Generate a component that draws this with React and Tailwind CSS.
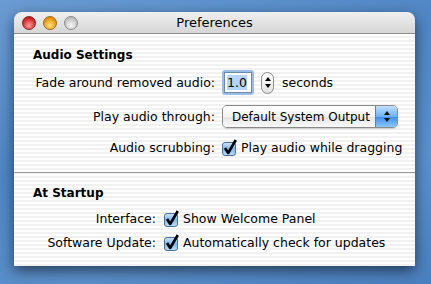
const Checkbox = () => (
  <svg width="17" height="18" viewBox="0 0 17 18" className="shrink-0">
    <defs>
      <linearGradient id="cbg" x1="0" y1="0" x2="0" y2="1">
        <stop offset="0" stopColor="#cfe6fb" />
        <stop offset="0.5" stopColor="#7db6ef" />
        <stop offset="1" stopColor="#b9e0ff" />
      </linearGradient>
    </defs>
    <rect x="1.5" y="3.5" width="13" height="13" rx="2.5" fill="url(#cbg)" stroke="#4f6f98" />
    <path d="M4 9 L7.2 14 L14.8 1" fill="none" stroke="#000" strokeWidth="2.6" strokeLinejoin="round" />
  </svg>
);

const Light = ({ from, to, border }) => (
  <div
    className="w-[14px] h-[14px] rounded-full border"
    style={{ background: `radial-gradient(circle at 50% 70%, ${from} 0%, ${to} 75%)`, borderColor: border }}
  />
);

const Row = ({ label, width, children, className = "" }) => (
  <div className={`flex items-center ${className}`}>
    <div className="text-right pr-[7px] shrink-0 whitespace-nowrap" style={{ width }}>{label}</div>
    <div className="flex items-center gap-[6px] whitespace-nowrap">{children}</div>
  </div>
);

export default function App() {
  return (
    <div className="w-[431px] h-[284px] overflow-hidden bg-[linear-gradient(160deg,#6a9bd2_0%,#4f86c4_40%,#5b90cb_70%,#4a80bf_100%)] pt-[12px] pl-[14px] font-['DejaVu_Sans',sans-serif] text-[12.5px] leading-[16px] text-black">
      <div className="w-[401px] h-[254px] flex flex-col rounded-t-[8px] shadow-[0_5px_14px_rgba(0,0,0,0.55)]">
        {/* title bar */}
        <div className="h-[22px] relative flex items-center justify-center rounded-t-[8px] bg-[linear-gradient(#f0f0f0,#d6d6d6)] border-b border-[#8c8c8c]">
          <div className="absolute left-[8px] top-[4px] flex gap-[7px]">
            <Light from="#ff9a9a" to="#c81818" border="#8a2020" />
            <Light from="#ffe27a" to="#e08a00" border="#9a6a10" />
            <Light from="#f8f8f8" to="#bdbdbd" border="#8a8a8a" />
          </div>
          <span className="text-[13px]">Preferences</span>
        </div>

        {/* body */}
        <div className="flex-1 bg-[image:repeating-linear-gradient(180deg,#ffffff_0px,#ffffff_2px,#f1f1f1_2px,#f1f1f1_4px)]">
          <div className="pt-[13px] pl-[19px] font-bold text-[12px]">Audio Settings</div>

          <Row label="Fade around removed audio:" width={208} className="mt-[7px]">
            <div className="p-[2px] rounded-[3px] bg-[#9dbde9]">
              <div className="w-[28px] h-[21px] bg-white border border-[#6d88ad] flex items-center pl-[2px]">
                <span className="bg-[#b5d5ff] leading-[15px]">1.0</span>
              </div>
            </div>
            <div className="w-[13px] h-[22px] rounded-full border border-[#8c8c8c] bg-[linear-gradient(#ffffff,#e2e2e2)] flex flex-col items-center justify-center gap-[3px] ml-[1px]">
              <div className="w-0 h-0 border-l-[3px] border-r-[3px] border-b-[4px] border-l-transparent border-r-transparent border-b-black" />
              <div className="w-0 h-0 border-l-[3px] border-r-[3px] border-t-[4px] border-l-transparent border-r-transparent border-t-black" />
            </div>
            <span className="ml-[2px]">seconds</span>
          </Row>

          <Row label="Play audio through:" width={208} className="mt-[10px]">
            <div className="w-[176px] h-[23px] flex rounded-[5px] border border-[#8a8a8a] overflow-hidden shadow-[0_1px_1px_rgba(0,0,0,0.15)]">
              <div className="flex-1 flex items-center pl-[9px] text-[12px] bg-[linear-gradient(#ffffff,#f3f3f3_50%,#e4e4e4_51%,#fafafa)]">
                Default System Output
              </div>
              <div className="w-[22px] flex flex-col items-center justify-center gap-[3px] bg-[linear-gradient(#c4e0ff,#6fb0f5_50%,#3d8be8_51%,#8cc8ff)] border-l border-[#5a7fb8]">
                <div className="w-0 h-0 border-l-[3px] border-r-[3px] border-b-[4px] border-l-transparent border-r-transparent border-b-[#111]" />
                <div className="w-0 h-0 border-l-[3px] border-r-[3px] border-t-[4px] border-l-transparent border-r-transparent border-t-[#111]" />
              </div>
            </div>
          </Row>

          <Row label="Audio scrubbing:" width={208} className="mt-[11px]">
            <div className="flex items-center gap-[3px] -ml-[1px]">
              <Checkbox />
              <span>Play audio while dragging</span>
            </div>
          </Row>

          <div className="mt-[15px] border-t border-[#9a9a9a]" />

          <div className="pt-[12px] pl-[19px] font-bold text-[12px]">At Startup</div>

          <Row label="Interface:" width={149} className="mt-[9px]">
            <div className="flex items-center gap-[3px]">
              <Checkbox />
              <span>Show Welcome Panel</span>
            </div>
          </Row>

          <Row label="Software Update:" width={149} className="mt-[6px]">
            <div className="flex items-center gap-[3px]">
              <Checkbox />
              <span>Automatically check for updates</span>
            </div>
          </Row>
        </div>
      </div>
    </div>
  );
}
